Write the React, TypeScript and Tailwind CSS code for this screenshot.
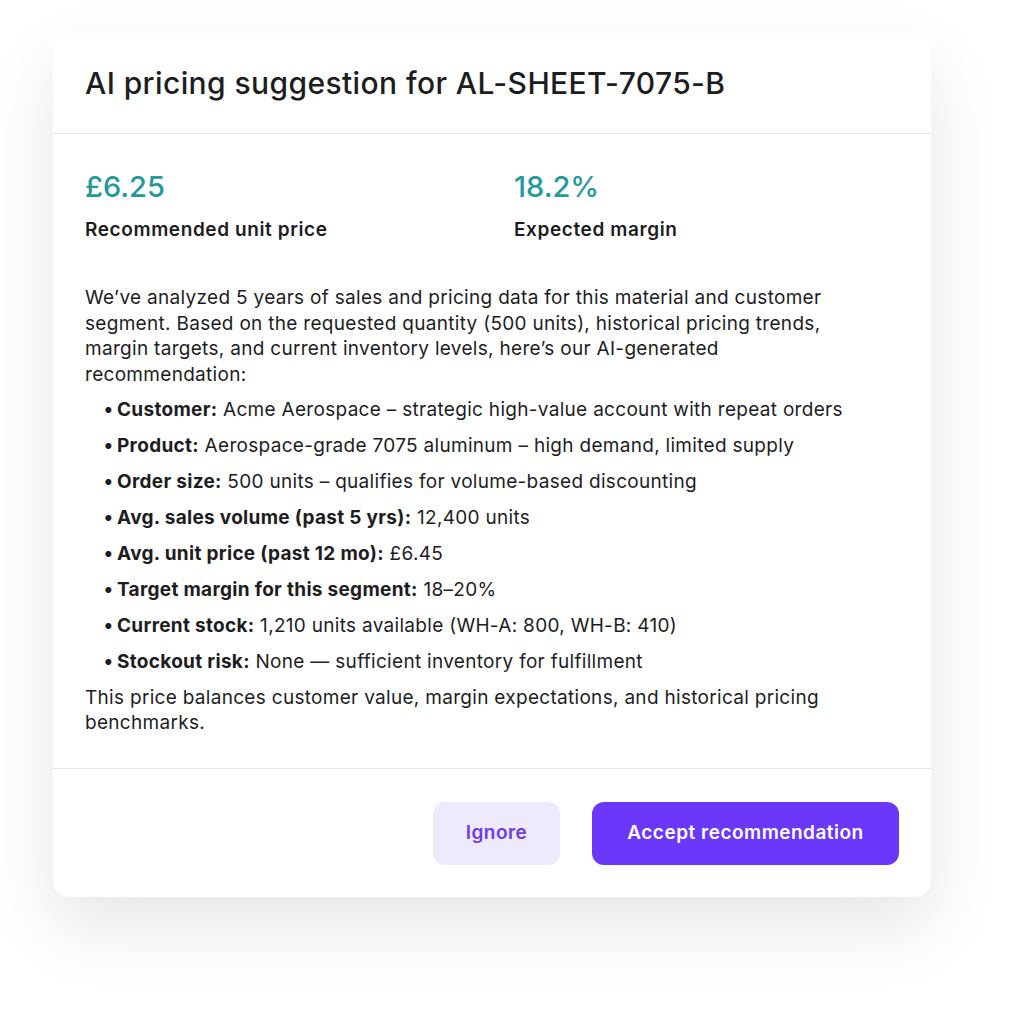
import React from "react";

const items: [string, string][] = [
  ["Customer:", "Acme Aerospace – strategic high-value account with repeat orders"],
  ["Product:", "Aerospace-grade 7075 aluminum – high demand, limited supply"],
  ["Order size:", "500 units – qualifies for volume-based discounting"],
  ["Avg. sales volume (past 5 yrs):", "12,400 units"],
  ["Avg. unit price (past 12 mo):", "£6.45"],
  ["Target margin for this segment:", "18–20%"],
  ["Current stock:", "1,210 units available (WH-A: 800, WH-B: 410)"],
  ["Stockout risk:", "None — sufficient inventory for fulfillment"],
];

export default function App() {
  return (
    <div
      className="min-h-[1009px] w-[1024px] bg-white pl-[53px] pt-[33px] text-[#1d1d1f]"
      style={{ fontFamily: "Inter, 'Noto Sans', sans-serif" }}
    >
      <div className="w-[878px] rounded-2xl bg-white shadow-[0_30px_70px_rgba(0,0,0,0.1)]">
        <div className="border-b border-[#e6e6e8] px-8 py-[33px]">
          <h1 className="text-[30px] leading-[34px] font-medium tracking-[0.4px]">
            AI pricing suggestion for AL-SHEET-7075-B
          </h1>
        </div>

        <div className="px-8 pt-9 pb-8">
          <div className="grid grid-cols-2">
            <div>
              <div className="text-[29px] leading-[34px] font-medium text-[#23999a]">£6.25</div>
              <div className="mt-[14px] text-[19px] leading-6 font-semibold tracking-[0.6px]">
                Recommended unit price
              </div>
            </div>
            <div className="pl-[22px]">
              <div className="text-[29px] leading-[34px] font-medium text-[#23999a]">18.2%</div>
              <div className="mt-[14px] text-[19px] leading-6 font-semibold tracking-[0.6px]">Expected margin</div>
            </div>
          </div>

          <div className="mt-[43px] text-[19px] leading-[25.5px] tracking-[0.3px]">
            <p className="max-w-[770px]">
              We’ve analyzed 5 years of sales and pricing data for this material and customer segment. Based on the
              requested quantity (500 units), historical pricing trends, margin targets, and current inventory levels,
              here’s our AI-generated recommendation:
            </p>
            <ul className="mt-[10px] flex flex-col gap-[10.5px] pl-[18px]">
              {items.map(([label, text]) => (
                <li key={label} className="flex">
                  <span className="w-[14px] shrink-0">•</span>
                  <span>
                    <b className="font-bold">{label}</b> {text}
                  </span>
                </li>
              ))}
            </ul>
            <p className="mt-[10px] max-w-[770px]">
              This price balances customer value, margin expectations, and historical pricing benchmarks.
            </p>
          </div>
        </div>

        <div className="flex justify-end gap-8 border-t border-[#e6e6e8] px-8 pt-[33px] pb-8">
          <button className="h-[63px] w-[127px] rounded-xl bg-[#efe9fe] text-[19px] font-semibold tracking-[0.5px] text-[#6a3de8]">
            Ignore
          </button>
          <button className="h-[63px] w-[307px] rounded-xl bg-[#6a37fb] text-[19px] font-semibold tracking-[0.5px] text-white">
            Accept recommendation
          </button>
        </div>
      </div>
    </div>
  );
}
